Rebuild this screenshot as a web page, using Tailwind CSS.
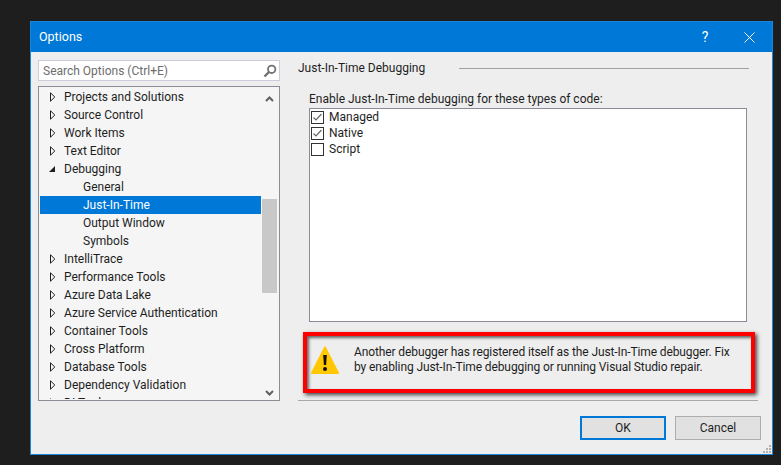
<!DOCTYPE html>
<html lang="en">

<head>
    <meta charset="UTF-8">
    <script src="https://cdn.jsdelivr.net/npm/@tailwindcss/browser@4"></script>
    <title>Options</title>
</head>

<body class="bg-[#1e1e1e] h-[465px] overflow-hidden font-['Roboto',sans-serif] text-[12px] text-[#1e1e1e]">
    <div class="ml-[30px] mt-[21px] w-[743px] h-[434px] border border-[#1a86dc] bg-[#eeeeef] flex flex-col relative">
        <!-- title bar -->
        <div class="h-[30px] shrink-0 bg-[#0078d7] text-white flex items-center pl-[8px]">
            <span class="text-[12.5px] grow">Options</span>
            <span class="text-[14px] w-[20px] text-center mr-[29px]">?</span>
            <svg class="mr-[17px]" width="11" height="11" viewBox="0 0 11 11" stroke="white" stroke-width="1"><path d="M0.5 0.5 10.5 10.5M10.5 0.5 0.5 10.5"/></svg>
        </div>

        <div class="flex grow">
            <!-- left: search + tree -->
            <div class="w-[242px] ml-[7px] mt-[8px] shrink-0">
                <div class="h-[21px] border border-[#ccccdc] bg-white flex items-center pl-[4px] pr-[2px] text-[#6d6d6d]">
                    <span class="grow">Search Options (Ctrl+E)</span>
                    <svg width="14" height="14" viewBox="0 0 14 14" fill="none" stroke="#717171"><circle cx="8.7" cy="5.3" r="3.7" stroke-width="1.8"/><path d="M6 8 1.5 12.5" stroke-width="2.4"/></svg>
                </div>
                <div class="h-[315px] mt-[5px] border border-[#8a8c96] bg-[#f5f5f5] flex p-[1px] overflow-hidden">
                    <div id="tree" class="w-[221px] h-[311px] overflow-hidden">
                        <div class="h-[18px] flex items-center pl-[9px]"><svg width="7" height="10" viewBox="0 0 7 10" fill="none" stroke="#1e1e1e"><path d="M1.5 .8v8.4L5.8 5z"/></svg><span class="ml-[8px]">Projects and Solutions</span></div>
                        <div class="h-[18px] flex items-center pl-[9px]"><svg width="7" height="10" viewBox="0 0 7 10" fill="none" stroke="#1e1e1e"><path d="M1.5 .8v8.4L5.8 5z"/></svg><span class="ml-[8px]">Source Control</span></div>
                        <div class="h-[18px] flex items-center pl-[9px]"><svg width="7" height="10" viewBox="0 0 7 10" fill="none" stroke="#1e1e1e"><path d="M1.5 .8v8.4L5.8 5z"/></svg><span class="ml-[8px]">Work Items</span></div>
                        <div class="h-[18px] flex items-center pl-[9px]"><svg width="7" height="10" viewBox="0 0 7 10" fill="none" stroke="#1e1e1e"><path d="M1.5 .8v8.4L5.8 5z"/></svg><span class="ml-[8px]">Text Editor</span></div>
                        <div class="h-[18px] flex items-center pl-[9px]"><svg width="7" height="10" viewBox="0 0 7 10" fill="#1e1e1e"><path d="M0 8h6V2z"/></svg><span class="ml-[8px]">Debugging</span></div>
                        <div class="h-[18px] flex items-center pl-[43px]">General</div>
                        <div class="h-[18px] flex items-center pl-[43px] bg-[#0078d7] text-white">Just-In-Time</div>
                        <div class="h-[18px] flex items-center pl-[43px]">Output Window</div>
                        <div class="h-[18px] flex items-center pl-[43px]">Symbols</div>
                        <div class="h-[18px] flex items-center pl-[9px]"><svg width="7" height="10" viewBox="0 0 7 10" fill="none" stroke="#1e1e1e"><path d="M1.5 .8v8.4L5.8 5z"/></svg><span class="ml-[8px]">IntelliTrace</span></div>
                        <div class="h-[18px] flex items-center pl-[9px]"><svg width="7" height="10" viewBox="0 0 7 10" fill="none" stroke="#1e1e1e"><path d="M1.5 .8v8.4L5.8 5z"/></svg><span class="ml-[8px]">Performance Tools</span></div>
                        <div class="h-[18px] flex items-center pl-[9px]"><svg width="7" height="10" viewBox="0 0 7 10" fill="none" stroke="#1e1e1e"><path d="M1.5 .8v8.4L5.8 5z"/></svg><span class="ml-[8px]">Azure Data Lake</span></div>
                        <div class="h-[18px] flex items-center pl-[9px]"><svg width="7" height="10" viewBox="0 0 7 10" fill="none" stroke="#1e1e1e"><path d="M1.5 .8v8.4L5.8 5z"/></svg><span class="ml-[8px]">Azure Service Authentication</span></div>
                        <div class="h-[18px] flex items-center pl-[9px]"><svg width="7" height="10" viewBox="0 0 7 10" fill="none" stroke="#1e1e1e"><path d="M1.5 .8v8.4L5.8 5z"/></svg><span class="ml-[8px]">Container Tools</span></div>
                        <div class="h-[18px] flex items-center pl-[9px]"><svg width="7" height="10" viewBox="0 0 7 10" fill="none" stroke="#1e1e1e"><path d="M1.5 .8v8.4L5.8 5z"/></svg><span class="ml-[8px]">Cross Platform</span></div>
                        <div class="h-[18px] flex items-center pl-[9px]"><svg width="7" height="10" viewBox="0 0 7 10" fill="none" stroke="#1e1e1e"><path d="M1.5 .8v8.4L5.8 5z"/></svg><span class="ml-[8px]">Database Tools</span></div>
                        <div class="h-[18px] flex items-center pl-[9px]"><svg width="7" height="10" viewBox="0 0 7 10" fill="none" stroke="#1e1e1e"><path d="M1.5 .8v8.4L5.8 5z"/></svg><span class="ml-[8px]">Dependency Validation</span></div>
                        <div class="h-[18px] flex items-center pl-[9px]"><svg width="7" height="10" viewBox="0 0 7 10" fill="none" stroke="#1e1e1e"><path d="M1.5 .8v8.4L5.8 5z"/></svg><span class="ml-[8px]">DI Tools</span></div>
                    </div>
                    <!-- scrollbar -->
                    <div class="w-[17px] flex flex-col items-center bg-[#f5f5f5] pl-[1px] pr-[1px]">
                        <svg class="mt-[8px]" width="9" height="6" viewBox="0 0 9 6" fill="none" stroke="#606060" stroke-width="2"><path d="M1 5 4.5 1.5 8 5"/></svg>
                        <div class="w-full h-[94px] mt-[97px] bg-[#c8c8c8]"></div>
                        <svg class="mt-[97px]" width="9" height="6" viewBox="0 0 9 6" fill="none" stroke="#606060" stroke-width="2"><path d="M1 1 4.5 4.5 8 1"/></svg>
                    </div>
                </div>
            </div>

            <!-- right: page -->
            <div class="grow ml-[18px] flex flex-col min-w-0">
                <div class="flex items-center h-[18px] mt-[7px]">
                    <span class="w-[161px]">Just-In-Time Debugging</span>
                    <div class="w-[290px] h-px bg-[#a0a0a0]"></div>
                </div>
                <div class="ml-[11px] mt-[14px] h-[16px] leading-[16px]">Enable Just-In-Time debugging for these types of code:</div>
                <div class="ml-[11px] mt-[1px] w-[438px] h-[214px] border border-[#8a8c96] bg-white pl-[1px]">
                    <div class="h-[16px] flex items-center"><span class="w-[13px] h-[13px] border border-[#333] flex items-center justify-center"><svg width="11" height="11" viewBox="0 0 11 11" fill="none" stroke="#666" stroke-width="1.2"><path d="M1.5 5.5 4 8 9.5 2"/></svg></span><span class="ml-[5px]">Managed</span></div>
                    <div class="h-[16px] flex items-center"><span class="w-[13px] h-[13px] border border-[#333] flex items-center justify-center"><svg width="11" height="11" viewBox="0 0 11 11" fill="none" stroke="#666" stroke-width="1.2"><path d="M1.5 5.5 4 8 9.5 2"/></svg></span><span class="ml-[5px]">Native</span></div>
                    <div class="h-[16px] flex items-center"><span class="w-[13px] h-[13px] border border-[#333]"></span><span class="ml-[5px]">Script</span></div>
                </div>
                <!-- warning, red markup box -->
                <div class="ml-[5px] mt-[10px] w-[452px] h-[61px] border-[4px] border-[#ff0000] shadow-[2px_2px_4px_#444,inset_2px_2px_3px_#666] flex items-center pl-[4px]">
                    <svg class="shrink-0 mb-[4px]" width="28" height="30" viewBox="0 0 28 30"><path d="M14 1.5 27 27H1z" fill="#ffc800" stroke="#ffc800" stroke-width="2" stroke-linejoin="round"/><path d="M12.2 9h3.6l-.7 10h-2.2z" fill="#111"/><circle cx="14" cy="23" r="2" fill="#111"/></svg>
                    <div class="ml-[15px] mb-[6px] leading-[15px] tracking-[-0.11px] whitespace-nowrap">Another debugger has registered itself as the Just-In-Time debugger. Fix<br>by enabling Just-In-Time debugging or running Visual Studio repair.</div>
                </div>
                <div class="w-[460px] h-px bg-[#a8a8a8] mt-[7px]"></div>
                <div class="flex mt-[15px] ml-[282px] gap-[9px]">
                    <div class="w-[86px] h-[24px] border-2 border-[#0078d7] bg-[#e1e1e1] flex items-center justify-center">OK</div>
                    <div class="w-[86px] h-[24px] border border-[#adadad] bg-[#e1e1e1] flex items-center justify-center">Cancel</div>
                </div>
            </div>
        </div>

        <!-- resize grip -->
        <svg class="absolute right-[1px] bottom-[1px]" width="8" height="8" viewBox="0 0 8 8" fill="#b0b0b0"><path d="M6 0h2v2H6zM3 3h2v2H3zM6 3h2v2H6zM0 6h2v2H0zM3 6h2v2H3zM6 6h2v2H6z"/></svg>
    </div>
</body>

</html>
